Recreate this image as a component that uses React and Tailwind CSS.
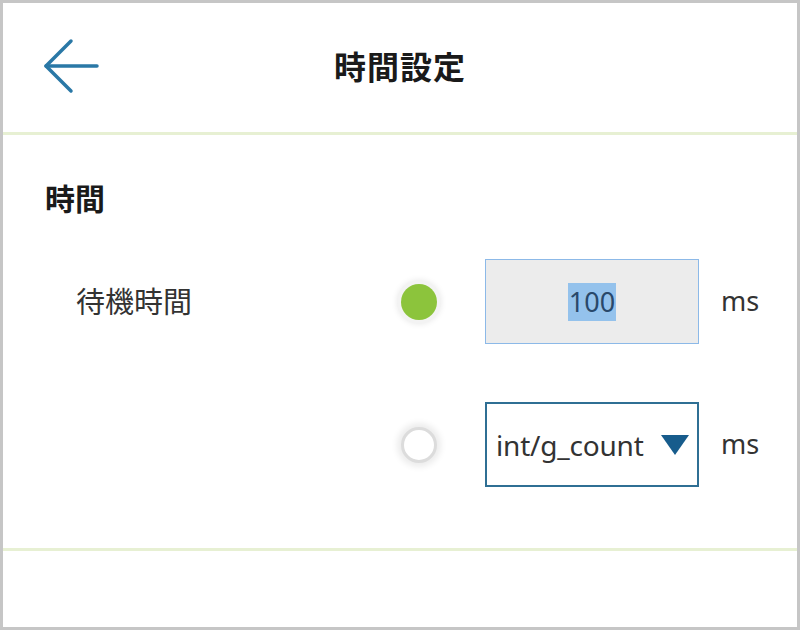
import React, { useState } from 'react';

const FONT = { fontFamily: '"Noto Sans", "Noto Sans CJK JP", sans-serif' };

const BackArrow = () => (
  <svg width="56" height="56" viewBox="0 0 56 56" fill="none" stroke="#2a78a6" strokeWidth="3.5" strokeLinecap="round" strokeLinejoin="round">
    <path d="M3 28h51" />
    <path d="M28 3L3 28l25 25" />
  </svg>
);

const Radio = ({ checked, onClick }) => (
  <button
    onClick={onClick}
    className={`w-[36px] h-[36px] rounded-full flex items-center justify-center shrink-0 ${
      checked
        ? 'bg-[#8cc43c] shadow-[0_0_0_4px_#f3f3f3,0_0_6px_4px_#e8e8e8]'
        : 'bg-white border-[3px] border-[#dcdcdc] shadow-[0_0_6px_4px_#ececec]'
    }`}
  />
);

export default function App() {
  const [mode, setMode] = useState('fixed');

  return (
    <div className="w-[800px] h-[630px] border-[3px] border-[#c6c6c6] bg-white flex flex-col" style={FONT}>
      {/* Header */}
      <div className="h-[129px] grid grid-cols-[1fr_auto_1fr] items-center shrink-0">
        <div className="pl-[40px] -mt-[3px]">
          <BackArrow />
        </div>
        <h1 className="text-[32px] font-bold text-[#1a1a1a] leading-none tracking-[1px] -mt-[2px]">時間設定</h1>
        <div />
      </div>
      <div className="h-[3px] bg-[#e7f0d3] shrink-0" />

      {/* Content */}
      <div className="pt-[49px] pl-[42px]">
        <h2 className="text-[30px] font-bold text-[#1a1a1a] leading-none">時間</h2>
      </div>

      <div className="mt-[45px] flex items-center pl-[73px]">
        <div className="w-[325px] text-[29px] text-[#333] leading-none">待機時間</div>
        <Radio checked={mode === 'fixed'} onClick={() => setMode('fixed')} />
        <div className="ml-[48px] w-[214px] h-[85px] bg-[#ececec] border border-[#8cb9e8] flex items-center justify-center">
          <span className="bg-[#94c2ec] text-[#29486a] text-[27px] leading-[38px] px-[1px]">100</span>
        </div>
        <span className="ml-[22px] text-[27px] text-[#333]">ms</span>
      </div>

      <div className="mt-[58px] flex items-center pl-[73px]">
        <div className="w-[325px]" />
        <Radio checked={mode === 'var'} onClick={() => setMode('var')} />
        <div className="ml-[48px] w-[214px] h-[85px] bg-white border-2 border-[#2f6f94] flex items-center justify-between pl-[9px] pr-[8px]">
          <span className="text-[28px] text-[#333] tracking-[-0.2px]">int/g_count</span>
          <svg width="28" height="20" viewBox="0 0 28 20">
            <path d="M0 0h28L14 20z" fill="#175c8c" />
          </svg>
        </div>
        <span className="ml-[22px] text-[27px] text-[#333]">ms</span>
      </div>

      <div className="mt-[61px] h-[3px] bg-[#e7f0d3] shrink-0" />
      <div className="flex-1" />
    </div>
  );
}
